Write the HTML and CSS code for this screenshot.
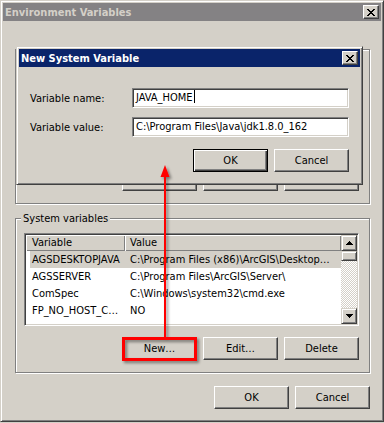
FILE: index.html
```html
<!DOCTYPE html>
<html lang="en">
<head>
    <meta charset="UTF-8">
    <meta name="viewport" content="width=device-width, initial-scale=1.0">
    <title>Environment Variables</title>
    <link rel="stylesheet" href="styles.css">
</head>
<body>
    <div class="window">
        <div class="titlebar inactive">
            <span class="title">Environment Variables</span>
            <span class="close-btn">
                <svg width="8" height="7" viewBox="0 0 8 7" shape-rendering="crispEdges"><path d="M0 0h2v1H0zM6 0h2v1H6zM1 1h2v1H1zM5 1h2v1H5zM2 2h4v1H2zM3 3h2v1H3zM2 4h4v1H2zM1 5h2v1H1zM5 5h2v1H5zM0 6h2v1H0zM6 6h2v1H6z"/></svg>
            </span>
        </div>

        <div class="window-body">
            <!-- user variables, covered by the dialog -->
            <div class="group user-group">
                <span class="group-label">User variables for Administrator</span>
                <div class="listview">
                    <div class="list-pane"></div>
                </div>
                <div class="btn-row">
                    <span class="btn"></span>
                    <span class="btn"></span>
                    <span class="btn"></span>
                </div>
            </div>

            <div class="group system-group">
                <span class="group-label">System variables</span>
                <div class="listview">
                    <div class="list-pane">
                        <div class="list-header">
                            <span class="col-name">Variable</span>
                            <span class="col-value">Value</span>
                        </div>
                        <div class="list-row selected">
                            <span class="col-name">AGSDESKTOPJAVA</span>
                            <span class="col-value">C:\Program Files (x86)\ArcGIS\Desktop…</span>
                        </div>
                        <div class="list-row">
                            <span class="col-name">AGSSERVER</span>
                            <span class="col-value">C:\Program Files\ArcGIS\Server\</span>
                        </div>
                        <div class="list-row">
                            <span class="col-name">ComSpec</span>
                            <span class="col-value">C:\Windows\system32\cmd.exe</span>
                        </div>
                        <div class="list-row">
                            <span class="col-name">FP_NO_HOST_C…</span>
                            <span class="col-value">NO</span>
                        </div>
                    </div>
                    <div class="scrollbar">
                        <span class="sb-btn">
                            <svg width="7" height="4" viewBox="0 0 7 4" shape-rendering="crispEdges"><path d="M3 0h1v1H3zM2 1h3v1H2zM1 2h5v1H1zM0 3h7v1H0z"/></svg>
                        </span>
                        <span class="sb-btn sb-thumb"></span>
                        <span class="sb-track"></span>
                        <span class="sb-btn">
                            <svg width="7" height="4" viewBox="0 0 7 4" shape-rendering="crispEdges"><path d="M0 0h7v1H0zM1 1h5v1H1zM2 2h3v1H2zM3 3h1v1H3z"/></svg>
                        </span>
                    </div>
                </div>
                <div class="btn-row">
                    <button class="btn">New…</button>
                    <button class="btn">Edit…</button>
                    <button class="btn">Delete</button>
                </div>
            </div>

            <div class="btn-row footer">
                <button class="btn">OK</button>
                <button class="btn">Cancel</button>
            </div>
        </div>

        <!-- child dialog on top -->
        <div class="dialog">
            <div class="titlebar active">
                <span class="title">New System Variable</span>
                <span class="close-btn">
                    <svg width="8" height="7" viewBox="0 0 8 7" shape-rendering="crispEdges"><path d="M0 0h2v1H0zM6 0h2v1H6zM1 1h2v1H1zM5 1h2v1H5zM2 2h4v1H2zM3 3h2v1H3zM2 4h4v1H2zM1 5h2v1H1zM5 5h2v1H5zM0 6h2v1H0zM6 6h2v1H6z"/></svg>
                </span>
            </div>
            <div class="dialog-body">
                <div class="form">
                    <label>Variable name:</label>
                    <div class="textbox">JAVA_HOME<span class="caret"></span></div>
                    <label>Variable value:</label>
                    <div class="textbox">C:\Program Files\Java\jdk1.8.0_162</div>
                </div>
                <div class="btn-row">
                    <button class="btn default">OK</button>
                    <button class="btn">Cancel</button>
                </div>
            </div>
        </div>

        <!-- red annotation -->
        <svg class="annotation" width="384" height="423" viewBox="0 0 384 423">
            <defs>
                <filter id="shadow" x="-50%" y="-10%" width="200%" height="120%">
                    <feDropShadow dx="2" dy="2" stdDeviation="1.5" flood-color="#000" flood-opacity="0.45"/>
                </filter>
            </defs>
            <g filter="url(#shadow)" fill="none" stroke="#ff0000">
                <line x1="165" y1="337" x2="165" y2="174" stroke-width="2"/>
                <polygon points="165,165 160.5,177 169.5,177" fill="#ff0000" stroke="none"/>
                <rect x="123.5" y="338.5" width="72" height="21" stroke-width="3"/>
            </g>
        </svg>
    </div>
</body>
</html>
```

FILE: styles.css
```css
body {
    margin: 0;
    background: #d4d0c8;
    font-family: "DejaVu Sans Condensed", "Liberation Sans", sans-serif;
    font-size: 11px;
    color: #000;
}
.window {
    position: relative;
    width: 384px;
    height: 422px;
    box-sizing: border-box;
    padding: 2px;
    background: #d4d0c8;
    border: 1px solid;
    border-color: #d4d0c8 #404040 #404040 #d4d0c8;
    box-shadow: inset 1px 1px #fff, inset -1px -1px #808080;
}
.titlebar {
    display: flex;
    align-items: center;
    justify-content: space-between;
    height: 18px;
    padding: 0 2px;
}
.titlebar.inactive {
    background: #848284;
    color: #d4d0c8;
}
.titlebar.active {
    background: #0a246a;
    color: #fff;
}
.title {
    font-weight: bold;
    white-space: nowrap;
}
.close-btn {
    display: flex;
    align-items: center;
    justify-content: center;
    width: 16px;
    height: 14px;
    box-sizing: border-box;
    background: #d4d0c8;
    border: 1px solid;
    border-color: #fff #404040 #404040 #fff;
    box-shadow: inset -1px -1px #808080;
}
.window-body {
    padding: 28px 11px 0 12px;
}
.group {
    display: flex;
    flex-direction: column;
    padding: 0 10px 12px 8px;
    border: 1px solid #808080;
    box-shadow: inset 1px 1px #fff, 1px 1px #fff;
}
.system-group {
    margin-top: 14px;
}
.group-label {
    align-self: flex-start;
    margin: -7px 0 0 -3px;
    padding: 0 2px;
    line-height: 13px;
    background: #d4d0c8;
    white-space: nowrap;
}
.user-group .group-label {
    margin-top: -6px;
}
.user-group .listview {
    margin-top: 7px;
}
.listview {
    display: flex;
    margin-top: 8px;
    height: 93px;
    box-sizing: border-box;
    padding: 1px;
    background: #fff;
    border: 1px solid;
    border-color: #808080 #fff #fff #808080;
    box-shadow: inset 1px 1px #404040, inset -1px -1px #d4d0c8;
}
.list-pane {
    flex: 1;
    min-width: 0;
    background: #fff;
}
.list-header {
    display: flex;
    height: 16px;
    line-height: 16px;
}
.list-header span {
    box-sizing: border-box;
    background: #d4d0c8;
    box-shadow: inset 1px 1px #fff, inset -1px -1px #808080;
}
.list-header .col-name {
    width: 99px;
    padding-left: 6px;
}
.list-header .col-value {
    flex: 1;
    padding-left: 5px;
}
.list-row {
    display: flex;
    height: 17px;
    line-height: 17px;
    margin-left: 4px;
    white-space: nowrap;
}
.list-row.selected {
    background: #d4d0c8;
}
.list-row .col-name {
    width: 95px;
    box-sizing: border-box;
    padding-left: 2px;
    overflow: hidden;
}
.list-row .col-value {
    flex: 1;
    padding-left: 5px;
    overflow: hidden;
}
.scrollbar {
    display: flex;
    flex-direction: column;
    width: 16px;
}
.sb-btn {
    display: flex;
    align-items: center;
    justify-content: center;
    height: 16px;
    box-sizing: border-box;
    background: #d4d0c8;
    border: 1px solid;
    border-color: #d4d0c8 #404040 #404040 #d4d0c8;
    box-shadow: inset 1px 1px #fff, inset -1px -1px #808080;
}
.sb-thumb {
    height: 10px;
}
.sb-track {
    flex: 1;
    background: repeating-conic-gradient(#d4d0c8 0 25%, #fff 0 50%) 0 0 / 2px 2px;
}
.btn-row {
    display: flex;
    justify-content: flex-end;
    gap: 6px;
    margin-top: 11px;
}
.btn-row.footer {
    margin-top: 13px;
}
.btn {
    display: block;
    width: 75px;
    height: 23px;
    box-sizing: border-box;
    padding: 0;
    font: inherit;
    color: #000;
    background: #d4d0c8;
    border: 1px solid;
    border-color: #fff #404040 #404040 #fff;
    box-shadow: inset -1px -1px #808080;
}
.btn.default {
    border-color: #000;
    box-shadow: inset 1px 1px #fff, inset -1px -1px #404040, inset -2px -2px #808080;
}
.dialog {
    position: absolute;
    left: 15px;
    top: 45px;
    width: 347px;
    height: 139px;
    box-sizing: border-box;
    padding: 2px;
    background: #d4d0c8;
    border: 1px solid;
    border-color: #d4d0c8 #404040 #404040 #d4d0c8;
    box-shadow: inset 1px 1px #fff, inset -1px -1px #808080;
}
.dialog-body {
    padding: 21px 11px 0 11px;
}
.form {
    display: grid;
    grid-template-columns: 102px 1fr;
    grid-auto-rows: 20px;
    row-gap: 9px;
    align-items: center;
}
.textbox {
    height: 20px;
    line-height: 18px;
    box-sizing: border-box;
    padding: 0 3px;
    background: #fff;
    white-space: nowrap;
    border: 1px solid;
    border-color: #808080 #fff #fff #808080;
    box-shadow: inset 1px 1px #404040, inset -1px -1px #d4d0c8;
}
.caret {
    display: inline-block;
    width: 1px;
    height: 13px;
    margin-left: 1px;
    vertical-align: -2px;
    background: #000;
}
.dialog .btn-row {
    margin-top: 12px;
}
.annotation {
    position: absolute;
    left: -1px;
    top: -1px;
    pointer-events: none;
}
```
